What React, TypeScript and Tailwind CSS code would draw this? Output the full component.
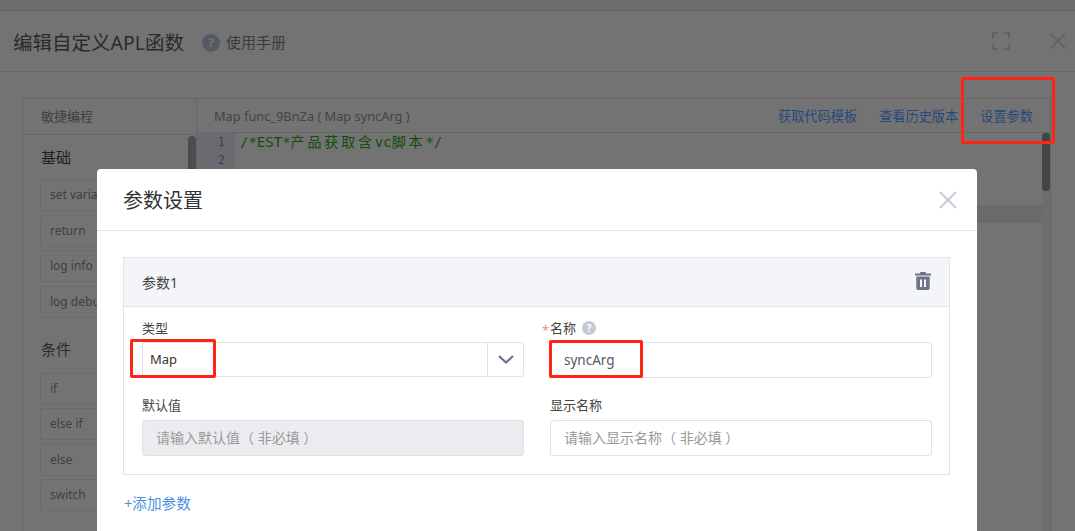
import { useState } from 'react'

const basics = ['set variable', 'return', 'log info', 'log debug']
const conditions = ['if', 'else if', 'else', 'switch']
const codeLines = [1, 2, 3, 4, 5, 6, 7, 8, 9, 10, 11, 12, 13, 14, 15, 16, 17, 18, 19, 20, 21]

function BlockButton({ label }: { label: string }) {
  return (
    <div className="flex h-[32px] w-[138px] items-center rounded-[2px] border border-[#6b6b6b] px-[9px] text-[12px] text-[#3f3f3f]">
      {label}
    </div>
  )
}

function HelpIcon({ className }: { className: string }) {
  return (
    <span className={`inline-flex items-center justify-center rounded-full font-bold ${className}`}>?</span>
  )
}

function CloseIcon({ className }: { className: string }) {
  return (
    <svg className={className} viewBox="0 0 18 18" fill="none" stroke="currentColor" strokeWidth={2.2}>
      <path d="M1 1l16 16M17 1L1 17" />
    </svg>
  )
}

function FullscreenIcon() {
  return (
    <svg className="h-[18px] w-[18px] text-[#5f6269]" viewBox="0 0 18 18" fill="none" stroke="currentColor" strokeWidth={2}>
      <path d="M1 6V1h5M12 1h5v5M17 12v5h-5M6 17H1v-5" />
    </svg>
  )
}

function TrashIcon() {
  return (
    <svg className="mb-[3px] h-[18px] w-[16px] text-[#6b7488]" viewBox="0 0 16 18" fill="currentColor">
      <path d="M5.5 0h5l.6 1.6H16v1.8H0V1.6h4.9z" />
      <path fillRule="evenodd" d="M1.3 4.6h13.4V16a2 2 0 0 1-2 2H3.3a2 2 0 0 1-2-2zM5 7.6V15h2V7.6zm4 0V15h2V7.6z" />
    </svg>
  )
}

function ChevronIcon() {
  return (
    <svg className="h-[9px] w-[16px] text-[#6b7488]" viewBox="0 0 16 9" fill="none" stroke="currentColor" strokeWidth={2.2}>
      <path d="M1 1l7 6.5L15 1" />
    </svg>
  )
}

function TextField({ value, placeholder, disabled }: { value?: string; placeholder?: string; disabled?: boolean }) {
  const [text, setText] = useState(value ?? '')
  return (
    <input
      value={text}
      onChange={e => setText(e.target.value)}
      placeholder={placeholder}
      disabled={disabled}
      className={`h-[36px] w-full rounded-[3px] border border-[#dfe1e6] px-[13px] text-[13.5px] text-[#545861] outline-none placeholder:text-[14px] placeholder:text-[#999] ${disabled ? 'bg-[#ebecf0]' : 'bg-white'}`}
    />
  )
}

function Annotation({ className }: { className: string }) {
  return <div className={`pointer-events-none absolute rounded-[2px] border-[3px] border-[#ff2414] ${className}`} />
}

function ParamsModal() {
  return (
    <div className="absolute bottom-0 left-[97px] top-[169px] w-[880px] rounded-t-[4px] bg-white">
      <div className="flex h-[62px] items-center justify-between border-b border-[#e2e4ea] pl-[26px] pr-[20px]">
        <h2 className="mt-[3px] text-[20px] text-[#333]">参数设置</h2>
        <CloseIcon className="h-[18px] w-[18px] text-[#c8ced6]" />
      </div>

      <div className="px-[26px] pt-[26px]">
        <div className="w-[827px] border border-[#e2e4e8]">
          <div className="flex h-[49px] items-center justify-between border-b border-[#e2e4e8] bg-[#f4f5f9] px-[18px]">
            <span className="text-[14px] text-[#444]">参数1</span>
            <TrashIcon />
          </div>

          <div className="grid grid-cols-[382px_382px] gap-x-[26px] gap-y-[18px] pb-[18px] pl-[18px] pt-[11px]">
            <div>
              <div className="h-[24px] text-[13px] leading-[20px] text-[#444]">类型</div>
              <div className="flex h-[35px] items-center rounded-[3px] border border-[#dfe1e6]">
                <span className="flex-1 pl-[7px] text-[13px] text-[#333]">Map</span>
                <span className="flex h-full w-[36px] items-center justify-center border-l border-[#dfe1e6]">
                  <ChevronIcon />
                </span>
              </div>
            </div>
            <div className="relative">
              <span className="absolute left-[-8px] top-[2px] text-[13px] leading-[20px] text-[#f58a80]">*</span>
              <div className="flex h-[24px] items-start gap-[6px] text-[13px] leading-[20px] text-[#444]">
                名称
                <HelpIcon className="mt-[3px] h-[14px] w-[14px] bg-[#c5cad6] text-[10px] leading-none text-white" />
              </div>
              <TextField value="syncArg" />
            </div>
            <div>
              <div className="h-[24px] text-[13px] leading-[18px] text-[#444]">默认值</div>
              <TextField disabled placeholder="请输入默认值（ 非必填 ）" />
            </div>
            <div>
              <div className="h-[24px] text-[13px] leading-[18px] text-[#444]">显示名称</div>
              <TextField placeholder="请输入显示名称（ 非必填 ）" />
            </div>
          </div>
        </div>

        <div className="pl-[1px] pt-[18px] text-[14.6px] leading-[20px] text-[#4a90e2]">+添加参数</div>
      </div>
    </div>
  )
}

export default function App() {
  return (
    <div className="relative h-[531px] w-full overflow-hidden bg-[#737373] font-['Noto_Sans','Noto_Sans_CJK_SC',sans-serif]">
      <div className="h-[11px] border-b border-[#666] bg-[#6d6d6d]" />

      <header className="flex h-[61px] items-center border-b border-[#666] pl-[13px] pr-[8px]">
        <h1 className="mt-[3px] text-[19.5px] text-[#2a2a2a]">编辑自定义APL函数</h1>
        <HelpIcon className="ml-[18px] mt-[3px] h-[18px] w-[18px] bg-[#555962] text-[13px] text-[#737373]" />
        <span className="ml-[6px] mt-[3px] text-[15px] text-[#3b3b3b]">使用手册</span>
        <div className="ml-auto flex items-center gap-[39px]">
          <FullscreenIcon />
          <CloseIcon className="h-[16px] w-[18px] text-[#5f6269]" />
        </div>
      </header>

      <main className="px-[22px] pt-[26px]">
        <div className="flex h-[440px] w-[1029px] rounded-t-[3px] border border-b-0 border-[#666]">
          <aside className="relative w-[174px] shrink-0 border-r border-[#666]">
            <div className="flex h-[36px] items-center border-b border-[#666] pl-[18px] pt-[1px] text-[13px] text-[#3f3f3f]">敏捷编程</div>
            <div className="absolute right-0 top-[37px] h-[80px] w-[8px] rounded-t-[4px] bg-[#4d4d4d]" />
            <div className="px-[17px] pt-[12px]">
              <h3 className="pl-[1px] text-[15px] leading-[20px] text-[#1f1f1f]">基础</h3>
              <div className="mt-[12px] flex flex-col gap-[3.5px]">
                {basics.map(label => <BlockButton key={label} label={label} />)}
              </div>
              <h3 className="mt-[21px] pl-[1px] text-[15px] leading-[20px] text-[#2a2a2a]">条件</h3>
              <div className="mt-[14px] flex flex-col gap-[3.5px]">
                {conditions.map(label => <BlockButton key={label} label={label} />)}
              </div>
            </div>
          </aside>

          <section className="flex min-w-0 flex-1 flex-col">
            <div className="flex h-[34px] items-center justify-between border-b border-[#666] px-[17px] pt-[2px] text-[13px]">
              <span className="text-[12.8px] text-[#444]">Map func_9BnZa ( Map syncArg )</span>
              <div className="flex gap-[22px] text-[13.2px] text-[#27497a]">
                <span>获取代码模板</span>
                <span>查看历史版本</span>
                <span>设置参数</span>
              </div>
            </div>
            <div className="flex min-h-0 flex-1 overflow-hidden font-['DejaVu_Sans_Mono','Noto_Sans_CJK_SC',monospace] text-[14px] leading-[18px]">
              <div className="w-[38px] shrink-0 bg-[#696b71] pr-[10px] text-right text-[12px] text-[#3f4147]">
                {codeLines.map(n => <div key={n} className="h-[18px]">{n}</div>)}
              </div>
              <div className="min-w-0 flex-1">
                {codeLines.map(n => (
                  <div key={n} className={`h-[18px] whitespace-nowrap pl-[5px] text-[#0f4f0a] ${n === 5 ? 'bg-[#6a6a6a]' : ''}`}>
                    {n === 1 && (
                      <>
                        /*EST*<span className="tracking-[2.85px]">产品获取含</span>vc<span className="tracking-[2.85px]">脚本</span>*/
                      </>
                    )}
                  </div>
                ))}
              </div>
              <div className="w-[8px] shrink-0 bg-[#6d6d6d]">
                <div className="h-[58px] rounded-full bg-[#444]" />
              </div>
            </div>
          </section>
        </div>
      </main>

      <ParamsModal />

      <Annotation className="left-[961px] top-[77px] h-[67px] w-[94px]" />
      <Annotation className="left-[130px] top-[339px] h-[39px] w-[86px]" />
      <Annotation className="left-[549px] top-[340px] h-[38px] w-[94px]" />
    </div>
  )
}
